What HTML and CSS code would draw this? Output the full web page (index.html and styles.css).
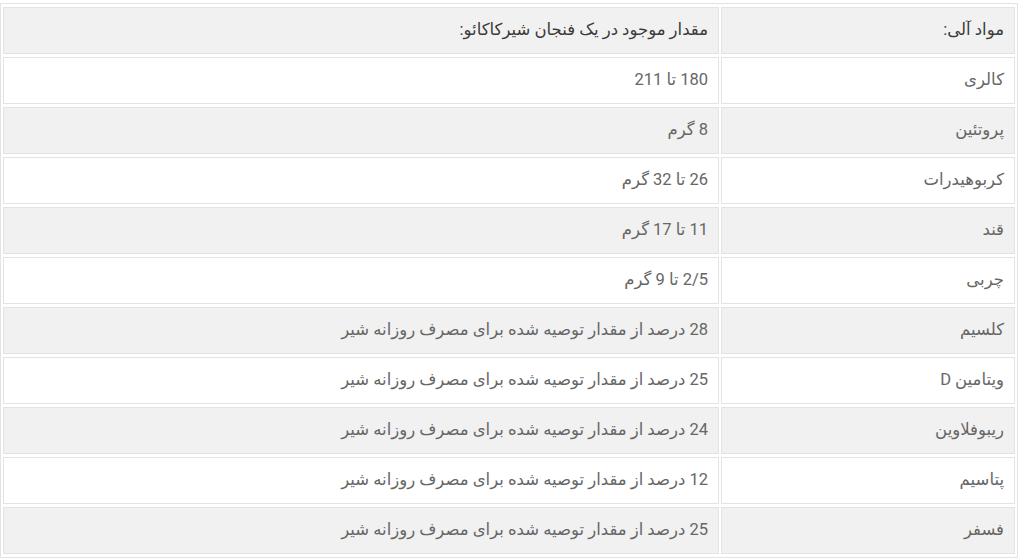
FILE: index.html
```html
<!DOCTYPE html>
<html lang="fa">
<head>
<meta charset="utf-8">
<title>مواد آلی شیرکاکائو</title>
<link rel="stylesheet" href="styles.css">
</head>
<body>
<div class="wrap">
<table class="nutri" dir="rtl">
  <thead>
    <tr class="shade">
      <th class="name">مواد آلی:</th>
      <th class="val">مقدار موجود در یک فنجان شیرکاکائو:</th>
    </tr>
  </thead>
  <tbody>
    <tr><td class="name">کالری</td><td class="val">180 تا 211</td></tr>
    <tr class="shade"><td class="name">پروتئین</td><td class="val">8 گرم</td></tr>
    <tr><td class="name">کربوهیدرات</td><td class="val">26 تا 32 گرم</td></tr>
    <tr class="shade"><td class="name">قند</td><td class="val">11 تا 17 گرم</td></tr>
    <tr><td class="name">چربی</td><td class="val">2/5 تا 9 گرم</td></tr>
    <tr class="shade"><td class="name">کلسیم</td><td class="val">28 درصد از مقدار توصیه شده برای مصرف روزانه شیر</td></tr>
    <tr><td class="name">ویتامین D</td><td class="val">25 درصد از مقدار توصیه شده برای مصرف روزانه شیر</td></tr>
    <tr class="shade"><td class="name">ریبوفلاوین</td><td class="val">24 درصد از مقدار توصیه شده برای مصرف روزانه شیر</td></tr>
    <tr><td class="name">پتاسیم</td><td class="val">12 درصد از مقدار توصیه شده برای مصرف روزانه شیر</td></tr>
    <tr class="shade"><td class="name">فسفر</td><td class="val">25 درصد از مقدار توصیه شده برای مصرف روزانه شیر</td></tr>
  </tbody>
</table>
</div>
</body>
</html>
```

FILE: styles.css
```css
html, body {
  margin: 0;
  padding: 0;
  background: #ffffff;
}

.wrap {
  padding: 3px 0 0 0;
}

.nutri {
  direction: rtl;
  width: 1018px;
  border-collapse: separate;
  border-spacing: 2px 3px;
  border: 1px solid #e3e3e3;
  font-family: Roboto, "DejaVu Sans", sans-serif;
  font-size: 16.5px;
  color: #666666;
}

.nutri th,
.nutri td {
  height: 47px;
  padding: 0 10px 3px 10px;
  border: 1px solid #e3e3e3;
  text-align: right;
  vertical-align: middle;
  box-sizing: border-box;
}

.nutri th {
  font-weight: normal;
  color: #3a3a3a;
}

.nutri .name {
  width: 294px;
}

.nutri .shade th,
.nutri .shade td {
  background: #f1f1f1;
}
```
